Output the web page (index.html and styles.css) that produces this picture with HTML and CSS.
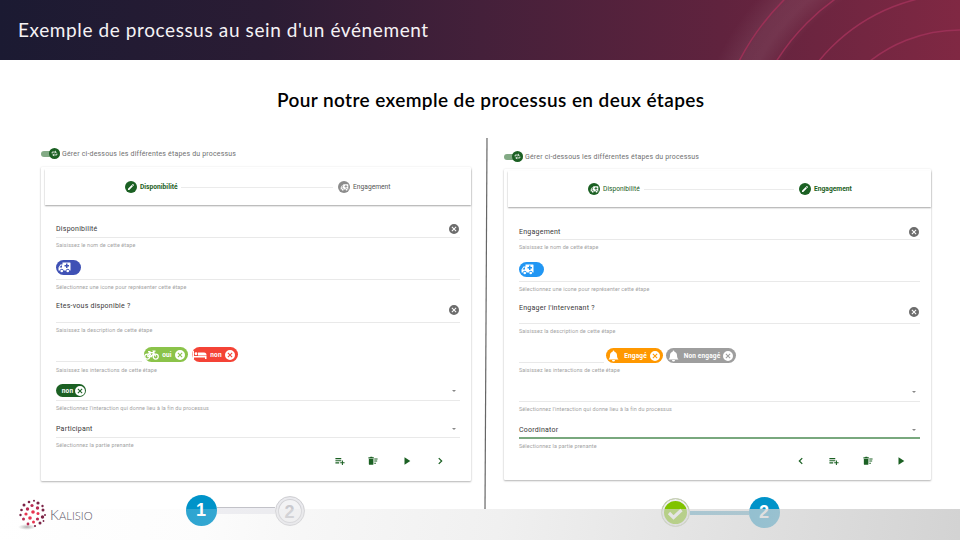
FILE: index.html
```
<!DOCTYPE html>
<html lang="fr">
<head>
<meta charset="utf-8">
<title>Exemple de processus au sein d'un événement</title>
<link rel="stylesheet" href="styles.css">
</head>
<body>
<svg class="defs" aria-hidden="true">
  <symbol id="edit" viewBox="0 0 24 24"><path d="M3 17.25V21h3.75L17.81 9.94l-3.75-3.75zM20.71 7.04a1 1 0 0 0 0-1.41l-2.34-2.34a1 1 0 0 0-1.41 0l-1.83 1.83 3.75 3.75z"/></symbol>
  <symbol id="truck" viewBox="0 0 26 22"><path fill-rule="evenodd" d="M9 1h15a1 1 0 0 1 1 1v15h-2a3.5 3.5 0 0 0-7 0h-5a3.5 3.5 0 0 0-7 0H1v-6l4-6h4zM6 7l-3 4h5V7zM16 3v3h-3v3h3v3h3V9h3V6h-3V3z"/><circle cx="7.5" cy="18" r="2.7"/><circle cx="19.500" cy="18" r="2.7"/></symbol>
  <symbol id="cancel" viewBox="2 2 20 20"><path d="M12 2a10 10 0 1 0 0 20 10 10 0 0 0 0-20zm5 13.590L15.590 17 12 13.410 8.410 17 7 15.590 10.590 12 7 8.410 8.410 7 12 10.590 15.590 7 17 8.410 13.410 12z"/></symbol>
  <symbol id="bike" viewBox="0 0 30 20"><g fill="none" stroke="currentColor" stroke-width="2.500"><circle cx="6.500" cy="13" r="5"/><circle cx="23.500" cy="13" r="5"/><path d="M6.500 13L11 5h8l4.500 8M11 5l4 8h-8M15 13l5-8-1.500-3H23M8 3h5"/></g></symbol>
  <symbol id="bed" viewBox="0 0 30 20"><path d="M1 2h3v10h25v6h-3v-3H4v3H1zM12 5h12a5 5 0 0 1 5 5v1H12z"/><circle cx="8" cy="7.500" r="2.800"/></symbol>
  <symbol id="bell" viewBox="0 0 24 24"><path d="M12 1a1.700 1.700 0 0 1 1.700 1.700v.8C17 4.300 19 7 19 10.500c0 5 1.500 6.500 3 8.500H2c1.500-2 3-3.500 3-8.500 0-3.500 2-6.200 5.300-7v-.8A1.700 1.700 0 0 1 12 1zM9 20h6a3 3 0 0 1-6 0z"/></symbol>
  <symbol id="add" viewBox="0 0 24 24"><path d="M1 5h14v2.800H1zM1 10h14v2.800H1zM1 15h9v2.800H1zM16.500 11H19v4h4v2.500h-4v4h-2.500v-4h-4V15h4z"/></symbol>
  <symbol id="sweep" viewBox="0 0 24 24"><path d="M2 7h11v12a2 2 0 0 1-2 2H4a2 2 0 0 1-2-2zM1 3h4l1-1h4l1 1h3v3H1zM15 6h8v2.300h-8zM15 11h7v2.300h-7zM15 16h4v2.300h-4z"/></symbol>
  <symbol id="play" viewBox="0 0 24 24"><path d="M6 3v18l14-9z"/></symbol>
  <symbol id="next" viewBox="0 0 24 24"><path d="M9 5l7 7-7 7" fill="none" stroke="currentColor" stroke-width="3"/></symbol>
  <symbol id="prev" viewBox="0 0 24 24"><path d="M15 5l-7 7 7 7" fill="none" stroke="currentColor" stroke-width="3"/></symbol>
  <symbol id="cycle" viewBox="0 0 24 24"><path d="M4 12V7h13M14 3l4 4-4 4M20 12v5H7M10 13l-4 4 4 4" fill="none" stroke="currentColor" stroke-width="2.800"/></symbol>
</svg>
<div class="slide">
  <header class="banner">
    <svg class="arcs" viewBox="700 0 260 60">
      <defs><radialGradient id="glow" gradientUnits="userSpaceOnUse" cx="960" cy="176" r="270">
        <stop offset=".78" stop-color="#fff" stop-opacity="0"/><stop offset=".86" stop-color="#fff" stop-opacity=".08"/><stop offset=".91" stop-color="#fff" stop-opacity=".07"/><stop offset="1" stop-color="#fff" stop-opacity="0"/>
      </radialGradient></defs>
      <rect x="700" width="260" height="60" fill="url(#glow)"/>
      <g fill="none" stroke="#9b3056" stroke-width="1.500"><circle cx="960" cy="176" r="146"/><circle cx="960" cy="176" r="182"/><circle cx="960" cy="176" r="216.500"/><circle cx="960" cy="176" r="249"/></g>
    </svg>
    <h1>Exemple de processus au sein d'un événement</h1>
  </header>
  <h2>Pour notre exemple de processus en deux étapes</h2>
  <main class="columns">
    <section class="column left">
      <div class="toggle"><span class="track"><i><svg><use href="#cycle"/></svg></i></span><span class="toggle-label">Gérer ci-dessous les différentes étapes du processus</span></div>
      <div class="card">
        <div class="stepper">
          <span class="badge"><svg><use href="#edit"/></svg></span><b class="step-name green">Disponibilité</b><span class="rule"></span><span class="badge grey"><svg class="wide"><use href="#truck"/></svg></span><span class="step-name">Engagement</span>
        </div>
        <div class="fields">
          <div class="control name"><span class="value">Disponibilité</span><svg class="clear"><use href="#cancel"/></svg></div><p class="hint">Saisissez le nom de cette étape</p>
          <div class="control icon"><span class="chip pick indigo"><svg><use href="#truck"/></svg></span></div><p class="hint">Sélectionnez une icone pour représenter cette étape</p>
          <div class="control question"><span class="value">Etes-vous disponible ?</span><svg class="clear"><use href="#cancel"/></svg></div><p class="hint">Saisissez la description de cette étape</p>
          <div class="control actions"><span class="stub"></span><span class="chip yes"><svg class="pict"><use href="#bike"/></svg><b>oui</b><svg class="x"><use href="#cancel"/></svg></span><span class="chip no"><svg class="pict"><use href="#bed"/></svg><b>non</b><svg class="x"><use href="#cancel"/></svg></span></div><p class="hint">Saisissez les interactions de cette étape</p>
          <div class="control ending"><span class="chip end"><b>non</b><svg class="x"><use href="#cancel"/></svg></span><i class="caret"></i></div><p class="hint">Sélectionnez l'interaction qui donne lieu à la fin du processus</p>
          <div class="control role"><span class="value">Participant</span><i class="caret"></i></div><p class="hint">Sélectionnez la partie prenante</p>
        </div>
        <div class="buttons"><svg><use href="#add"/></svg><svg><use href="#sweep"/></svg><svg><use href="#play"/></svg><svg><use href="#next"/></svg></div>
      </div>
      <div class="tracker">
        <span class="dot blue">1</span><span class="bar pale"></span><span class="dot pending">2</span>
      </div>
    </section>
    <svg class="divider" viewBox="0 0 6 371"><path d="M3 0L1 371" stroke="#666" stroke-width="1.200"/></svg>
    <section class="column right">
      <div class="toggle"><span class="track"><i><svg><use href="#cycle"/></svg></i></span><span class="toggle-label">Gérer ci-dessous les différentes étapes du processus</span></div>
      <div class="card">
        <div class="stepper">
          <span class="badge"><svg class="wide"><use href="#truck"/></svg></span><span class="step-name green">Disponibilité</span><span class="rule"></span><span class="badge"><svg><use href="#edit"/></svg></span><b class="step-name green">Engagement</b>
        </div>
        <div class="fields">
          <div class="control name"><span class="value">Engagement</span><svg class="clear"><use href="#cancel"/></svg></div><p class="hint">Saisissez le nom de cette étape</p>
          <div class="control icon"><span class="chip pick azure"><svg><use href="#truck"/></svg></span></div><p class="hint">Sélectionnez une icone pour représenter cette étape</p>
          <div class="control question"><span class="value">Engager l'intervenant ?</span><svg class="clear"><use href="#cancel"/></svg></div><p class="hint">Saisissez la description de cette étape</p>
          <div class="control actions"><span class="stub"></span><span class="chip engaged"><svg class="pict"><use href="#bell"/></svg><b>Engagé</b><svg class="x"><use href="#cancel"/></svg></span><span class="chip idle"><svg class="pict"><use href="#bell"/></svg><b>Non engagé</b><svg class="x"><use href="#cancel"/></svg></span></div><p class="hint">Saisissez les interactions de cette étape</p>
          <div class="control ending"><i class="caret"></i></div><p class="hint">Sélectionnez l'interaction qui donne lieu à la fin du processus</p>
          <div class="control role focused"><span class="value">Coordinator</span><i class="caret"></i></div><p class="hint">Sélectionnez la partie prenante</p>
        </div>
        <div class="buttons"><svg><use href="#prev"/></svg><svg><use href="#add"/></svg><svg><use href="#sweep"/></svg><svg><use href="#play"/></svg></div>
      </div>
      <div class="tracker">
        <span class="dot done"><svg viewBox="0 0 20 20"><path d="M4 10l4.500 4.500L16.500 7" fill="none" stroke="#fff" stroke-width="3.200"/></svg></span><span class="bar teal"></span><span class="dot blue">2</span>
      </div>
    </section>
  </main>
  <footer class="footer">
    <div class="veil"></div>
    <div class="brand">
      <svg viewBox="0 0 30 34"><defs><radialGradient id="shade"><stop offset="0" stop-color="#777" stop-opacity=".6"/><stop offset="1" stop-color="#999" stop-opacity="0"/></radialGradient></defs>
        <ellipse cx="9" cy="29" rx="9" ry="3" fill="url(#shade)"/>
        <g fill="#7c2447"><circle cx="11" cy="4" r="1.300"/><circle cx="16" cy="2.800" r="1"/><circle cx="20" cy="5" r="1.600"/><circle cx="6" cy="7" r="1.500"/><circle cx="24.500" cy="8" r="1.200"/><circle cx="3.500" cy="12" r="1.300"/><circle cx="25" cy="12" r="1.500"/><circle cx="27" cy="17" r="1"/><circle cx="2.500" cy="17" r="1.200"/><circle cx="24.500" cy="19" r="1.700"/><circle cx="22" cy="25" r="1.500"/><circle cx="25.500" cy="23" r=".9"/><circle cx="17" cy="28" r="1.100"/></g>
        <g fill="#b92b52"><circle cx="14" cy="7.500" r="1.600"/><circle cx="19.500" cy="10" r="1.700"/><circle cx="9.500" cy="11" r="1.700"/><circle cx="5.500" cy="21" r="1.500"/><circle cx="10" cy="26" r="1.400"/><circle cx="19.500" cy="21" r="1.600"/></g>
        <g fill="#e8344f"><circle cx="15" cy="14" r="1.800"/><circle cx="8" cy="16" r="1.600"/><circle cx="12" cy="20" r="1.800"/><circle cx="20" cy="15.500" r="1.500"/><circle cx="15.500" cy="24" r="1.500"/></g>
      </svg>
      <span class="wordmark">K<small>ALISIO</small></span>
    </div>
  </footer>
</div>
</body>
</html>
```
FILE: styles.css
```
* { box-sizing: border-box; }
body { margin: 0; background: #fff; font-family: Roboto, "Liberation Sans", sans-serif; }
h1, h2, p { margin: 0; font-weight: 400; }
svg { display: block; fill: currentColor; flex: none; }
.defs { position: absolute; width: 0; height: 0; }
.slide { position: relative; width: 960px; height: 540px; overflow: hidden; display: flex; flex-direction: column; }

.banner { position: relative; height: 60px; padding-left: 18px; display: flex; align-items: center; color: #f5f2f5; background: linear-gradient(90deg, #1b1a32 0, #2b1c34 28%, #44203a 50%, #60233e 75%, #802843 100%); }
.arcs { position: absolute; right: 0; top: 0; width: 260px; height: 60px; }
h1 { font: 400 19px/24px Lato, sans-serif; letter-spacing: .6px; white-space: nowrap; }
h2 { height: 78px; padding: 28px 0 0 277px; font: 600 19px/24px Lato, sans-serif; letter-spacing: .4px; color: #000; white-space: nowrap; }

.columns { display: flex; align-items: flex-start; height: 402px; padding-left: 41px; }
.left { width: 430px; padding-top: 9px; }
.divider { width: 6px; height: 371px; margin: 0 14px 0 13px; }
.right { width: 427px; padding-top: 12px; }

.toggle { display: flex; align-items: center; height: 13px; gap: 2px; font-size: 7px; color: #707070; white-space: nowrap; }
.track { width: 19px; height: 6px; border-radius: 3px; background: #83aa85; display: flex; align-items: center; justify-content: flex-end; }
.track i { display: grid; place-items: center; width: 11px; height: 11px; border-radius: 50%; background: #1b6023; color: #fff; }
.track svg { width: 7px; height: 7px; }
.toggle-label { letter-spacing: .18px; }

.card { height: 314px; margin-top: 7px; background: #fff; border-radius: 1px; box-shadow: 0 1px 2px rgba(0,0,0,.28), 0 0 2px rgba(0,0,0,.08); }
.right .card { height: 311px; margin-top: 6px; }
.stepper { display: flex; align-items: center; height: 36px; margin-left: 4px; padding-left: 80px; box-shadow: 0 1px 1.500px rgba(0,0,0,.35); position: relative; top: 2px; font-size: 6.700px; color: #555; white-space: nowrap; }
.badge { display: grid; place-items: center; width: 12px; height: 12px; border-radius: 50%; background: #1b6023; color: #fff; flex: none; }
.badge svg { width: 8px; height: 8px; }
.badge svg.wide { width: 9px; height: 7px; }
.badge.grey { background: #8c8c8c; }
.step-name { width: 38px; margin-left: 3px; }
.step-name.green { color: #1b6023; }
.rule { width: 152px; height: 1px; margin: 0 5px 0 3px; background: #ebebeb; }
.right .rule { width: 150px; }

.fields { padding: 2px 11px 0 15px; }
.control { display: flex; align-items: flex-end; justify-content: space-between; border-bottom: 1px solid #e9e9e9; }
.value { font-size: 7px; line-height: 9px; letter-spacing: .24px; white-space: nowrap; color: #383838; }
.hint { height: 15px; font-size: 5.400px; line-height: 15px; letter-spacing: .12px; color: #a3a3a3; white-space: nowrap; }
.clear { width: 10px; height: 10px; margin-right: 1px; color: #6c6c6c; }
.caret { border: 2.500px solid transparent; border-top-color: #888; border-bottom: 0; margin: 0 4px 1px auto; }
.name { height: 33px; padding-bottom: 3px; }
.icon { height: 27px; padding-bottom: 4px; }
.question { height: 28px; padding-bottom: 7px; }
.question .value { margin-bottom: 4px; }
.left .actions + .hint { position: relative; top: 1px; }
.actions { height: 24px; justify-content: flex-start; border: 0; }
.ending { height: 24px; padding-bottom: 3px; }
.role { height: 22px; padding-bottom: 3px; }
.ending .caret { margin-bottom: 5px; }
.role .caret { margin-bottom: 4px; }
.right .name { padding-bottom: 2px; }
.right .question { height: 27px; padding-bottom: 6px; }
.right .role { height: 22px; padding-bottom: 2px; }
.role.focused { border-bottom: 2px solid #79a87e; }
.role.focused + .hint { height: 14px; line-height: 14px; }

.chip { display: flex; align-items: center; height: 15px; border-radius: 8px; color: #fff; font-size: 6.500px; letter-spacing: .15px; white-space: nowrap; }
.chip b { flex: 1; text-align: center; }
.chip .x { width: 10px; height: 10px; margin-right: 3px; }
.end .x { margin-right: 1px; }
.chip .pict { width: 15px; height: 12px; }
.pick { width: 25px; padding-left: 2px; }
.pick svg { width: 13px; height: 11px; }
.indigo { background: #3f51b5; }
.azure { background: #2196f3; }
.stub { width: 86px; border-bottom: 1px solid #e9e9e9; margin-right: 2px; }
.yes { width: 44px; background: #8bc34a; margin-right: 4px; }
.no { width: 46px; background: #f44336; }
.end { width: 30px; height: 13px; padding-left: 4px; background: #1b6023; }
.right .stub { width: 85px; }
.engaged { width: 57px; background: #ff9800; margin-right: 3px; }
.idle { width: 70px; background: #9e9e9e; }

.buttons { display: flex; gap: 23.500px; justify-content: flex-end; padding: 3px 26px 0 0; color: #1b6023; }
.right .buttons { padding: 3px 25px 0 0; }
.buttons svg { width: 10px; height: 10px; }

.tracker { display: flex; align-items: center; height: 31px; margin-top: 14px; padding-left: 144.500px; }
.right .tracker { margin-top: 17px; padding-left: 156.500px; }
.dot { display: grid; place-items: center; flex: none; width: 31px; height: 31px; border-radius: 50%; font: 700 18px/31px "Liberation Sans", sans-serif; }
.blue { background: #0093c9; color: #fff; }
.pending { width: 30px; height: 30px; border: 1px solid #cfcfd3; color: #c9c9ce; background: #f3f3f5; box-shadow: inset 0 0 0 2px #eaeaee, inset 0 0 0 3px #d2d2d6; }
.done { width: 29px; height: 29px; border: 1px solid #ccc; background: #80c300; box-shadow: inset 0 0 0 2px #ededf0; }
.done svg { width: 20px; height: 20px; }
.bar { width: 58px; height: 7px; }
.pale { background: #ededf2; border-top: 1px solid #c2c2c8; }
.teal { height: 4px; width: 59px; background: #55a9c9; }

.footer { position: absolute; left: 0; right: 0; bottom: 0; height: 42px; }
.veil { position: absolute; left: 0; right: 0; bottom: 0; height: 31px; background: linear-gradient(100deg, rgba(255,255,255,.05) 0, rgba(241,241,241,.2) 21%, rgba(231,231,231,.32) 31%, rgba(225,225,225,.5) 52%, rgba(211,211,211,.7) 78%, rgba(206,206,206,.9) 100%); }
.brand { position: relative; display: flex; align-items: center; gap: 1px; padding-left: 18px; }
.brand svg { width: 30px; height: 34px; }
.wordmark { font: 300 14px/16px Lato, sans-serif; color: #5c5566; margin-left: 1px; }
.wordmark small { font-size: 11.200px; }
```
